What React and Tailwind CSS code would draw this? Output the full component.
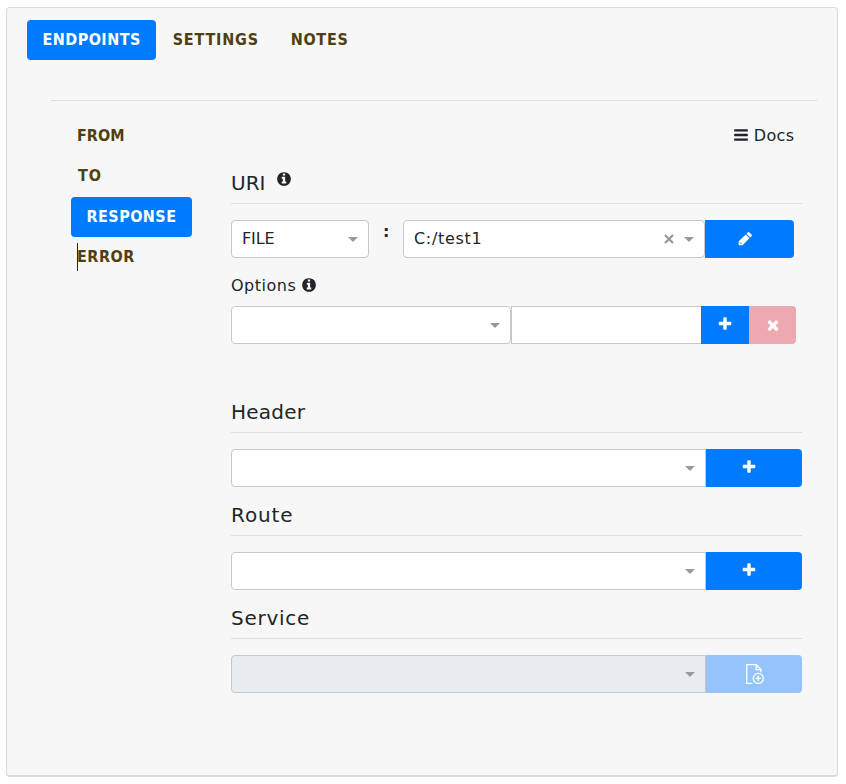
import React from 'react';

const PLUS =
  'M1600 736v192q0 40-28 68t-68 28h-416v416q0 40-28 68t-68 28h-192q-40 0-68-28t-28-68v-416h-416q-40 0-68-28t-28-68v-192q0-40 28-68t68-28h416v-416q0-40 28-68t68-28h192q40 0 68 28t28 68v416h416q40 0 68 28t28 68z';
const TIMES =
  'M1490 1322q0 40-28 68l-136 136q-28 28-68 28t-68-28l-294-294-294 294q-28 28-68 28t-68-28l-136-136q-28-28-28-68t28-68l294-294-294-294q-28-28-28-68t28-68l136-136q28-28 68-28t68 28l294 294 294-294q28-28 68-28t68 28l136 136q28 28 28 68t-28 68l-294 294 294 294q28 28 28 68z';
const INFO =
  'M1152 1376v-160q0-14-9-23t-23-9h-96v-512q0-14-9-23t-23-9h-320q-14 0-23 9t-9 23v160q0 14 9 23t23 9h96v320h-96q-14 0-23 9t-9 23v160q0 14 9 23t23 9h448q14 0 23-9t9-23zm-128-896v-160q0-14-9-23t-23-9h-192q-14 0-23 9t-9 23v160q0 14 9 23t23 9h192q14 0 23-9t9-23zm640 416q0 209-103 385.5t-279.5 279.5-385.5 103-385.5-103-279.5-279.5-103-385.5 103-385.5 279.5-279.5 385.5-103 385.5 103 279.5 279.5 103 385.5z';
const BARS =
  'M1664 1344v128q0 26-19 45t-45 19h-1408q-26 0-45-19t-19-45v-128q0-26 19-45t45-19h1408q26 0 45 19t19 45zm0-512v128q0 26-19 45t-45 19h-1408q-26 0-45-19t-19-45v-128q0-26 19-45t45-19h1408q26 0 45 19t19 45zm0-512v128q0 26-19 45t-45 19h-1408q-26 0-45-19t-19-45v-128q0-26 19-45t45-19h1408q26 0 45 19t19 45z';

function Icon({ d, className = '' }) {
  return (
    <svg viewBox="0 0 1792 1792" fill="currentColor" className={`size-4 shrink-0 ${className}`}>
      <path d={d} />
    </svg>
  );
}

function Pencil({ className = '' }) {
  return (
    <svg viewBox="0 0 16 16" fill="currentColor" className={`size-4 shrink-0 ${className}`}>
      <path d="M8.7 3.6l3.7 3.7-6.6 6.6q-.4.4-.9.4H2.2q-.6 0-.6-.6V11q0-.5.4-.9z" />
      <path d="M9.5 2.8l1.3-1.3q.8-.8 1.6 0l2.1 2.1q.8.8 0 1.6l-1.3 1.3z" />
      <path d="M2.9 11.3l1.8 1.8" stroke="#007bff" strokeWidth=".9" />
    </svg>
  );
}

function Caret({ className = '' }) {
  return (
    <svg viewBox="0 0 10 5" className={`h-[5px] w-[10px] shrink-0 fill-[#999999] ${className}`}>
      <path d="M0 0h10L5 5z" />
    </svg>
  );
}

function Select({ value, clearable, className = '', textClass = '' }) {
  return (
    <div className={`flex h-[38px] items-center border border-[#c8c8c8] pl-2.5 ${className}`}>
      <span className={`flex-1 ${textClass}`}>{value}</span>
      {clearable && (
        <svg viewBox="0 0 10 10" className="mr-2.5 -mt-px size-2.5 stroke-[#999999]">
          <path d="M1 1l8 8M9 1L1 9" strokeWidth="2.3" />
        </svg>
      )}
      <Caret className="mt-px mr-2.5" />
    </div>
  );
}

function SectionTitle({ children }) {
  return (
    <div className="flex h-[42px] items-start border-b border-[#dedede] pr-2 text-[20px] leading-6 text-[#212529]">
      {children}
    </div>
  );
}

function ButtonBlue({ children, className = '' }) {
  return (
    <button className={`flex h-[38px] items-center justify-center bg-[#007bff] text-white ${className}`}>
      {children}
    </button>
  );
}

function FileAdd() {
  return (
    <svg viewBox="0 0 18 20" fill="none" stroke="currentColor" strokeWidth="1.3" className="h-5 w-[18px]">
      <path d="M6.5 19.3H.7V.7h9.7l4.6 4.8v3.1" />
      <path d="M10.2.8v4.8H15" />
      <circle cx="12.3" cy="14.4" r="5" />
      <path d="M12.3 11.8v5.2M9.7 14.4h5.2" strokeWidth="1.4" />
    </svg>
  );
}

function Section({ title, titleClass, disabled }) {
  return (
    <section className="h-[103px]">
      <SectionTitle>
        <span className={titleClass}>{title}</span>
      </SectionTitle>
      <div className="mt-4 flex">
        <Select className={`w-[475px] rounded-l-[4px] ${disabled ? 'bg-[#e9ecef]' : 'bg-white'}`} />
        {disabled ? (
          <button disabled className="flex h-[38px] w-24 items-center justify-center rounded-r-[4px] bg-[#94c4fb] pl-0.5 text-white">
            <FileAdd />
          </button>
        ) : (
          <ButtonBlue className="w-24 rounded-r-[4px] pr-[11px]">
            <Icon d={PLUS} className="mb-[1.5px]" />
          </ButtonBlue>
        )}
      </div>
    </section>
  );
}

export default function App() {
  return (
    <div className="h-[784px] bg-white pt-[7px] pl-1.5 font-['DejaVu_Sans',sans-serif] text-[16px] leading-6 text-[#212529]">
      <main className="h-[770px] w-[832px] rounded-[4px] border border-b-2 border-[#dbdbdb] bg-[#f7f7f7] pt-3 pl-5">
        <nav className="flex h-10 font-['DejaVu_Sans_Condensed','DejaVu_Sans',sans-serif] font-bold font-stretch-condensed text-[#513f10]">
          <span className="w-[129px] rounded-[4px] bg-[#007bff] pt-2 pl-[15.5px] tracking-[0.45px] text-white">ENDPOINTS</span>
          <span className="w-[118px] pt-2 pl-[16.7px] tracking-[0.8px]">SETTINGS</span>
          <span className="pt-2 pl-[16.7px] tracking-[0.7px]">NOTES</span>
        </nav>
        <div className="mt-10 ml-6 h-px w-[766px] bg-[#dedede]" />
        <div className="flex">
          <aside className="mt-[15px] ml-11 w-[160px] font-['DejaVu_Sans_Condensed','DejaVu_Sans',sans-serif] font-bold font-stretch-condensed text-[#513f10]">
            <div className="h-10 pt-2 pl-1.5">FROM</div>
            <div className="h-10 pt-2 pl-[7px] tracking-[0.9px]">TO</div>
            <div className="mt-px h-10 w-[121px] rounded-[4px] bg-[#007bff] pt-2 pl-[15.5px] tracking-[0.45px] text-white">RESPONSE</div>
            <div className="ml-1.5 mt-1.5 h-7 border-l border-[#2b2410] pt-[1.5px]">
              <span className="-ml-px tracking-[0.5px]">ERROR</span>
            </div>
          </aside>
          <div className="w-[571px] pt-[22px]">
            <div className="flex h-6 items-center justify-end gap-1 pt-0.5 pr-[7.5px]">
              <Icon d={BARS} className="-mt-0.5 mr-px" />
              <span className="tracking-[0.4px]">Docs</span>
            </div>
            <div className="mt-[23px]">
              <div className="flex h-[34px] items-start border-b border-[#dedede] text-[20px]">
                <span className="pt-px">URI</span>
                <Icon d={INFO} className="ml-[11px] mt-px" />
              </div>
            </div>
            <div className="mt-4 flex">
              <Select value="FILE" className="w-[138px] rounded-[4px] bg-white" textClass="tracking-[-0.1px]" />
              <span className="w-[34px] pl-3.5 font-bold">:</span>
              <Select value="C:/test1" clearable className="w-[302px] rounded-[4px] bg-white" textClass="tracking-[0.7px]" />
              <ButtonBlue className="w-[89px] rounded-r-[4px] pr-2.5">
                <Pencil className="mb-px" />
              </ButtonBlue>
            </div>
            <div className="mt-[15px] flex h-6 items-center">
              <span className="pt-0.5 tracking-[0.5px]">Options</span>
              <Icon d={INFO} className="ml-[5px]" />
            </div>
            <div className="mt-[9px] flex">
              <Select className="w-[280px] rounded-[4px] bg-white" />
              <div className="h-[38px] w-[190px] border border-r-0 border-[#c8c8c8] bg-white" />
              <ButtonBlue className="w-12">
                <Icon d={PLUS} className="mb-[1.5px]" />
              </ButtonBlue>
              <button className="flex h-[38px] w-[47px] items-center justify-center rounded-r-[4px] bg-[#eea9b0] text-white">
                <Icon d={TIMES} className="mb-px" />
              </button>
            </div>
            <div className="mt-[47px]">
              <Section title="Header" titleClass="pt-[9px] tracking-[0.25px]" />
              <Section title="Route" titleClass="pt-[9px] tracking-[0.9px]" />
              <Section title="Service" titleClass="pt-[9px] tracking-[0.75px]" disabled />
            </div>
          </div>
        </div>
      </main>
    </div>
  );
}
